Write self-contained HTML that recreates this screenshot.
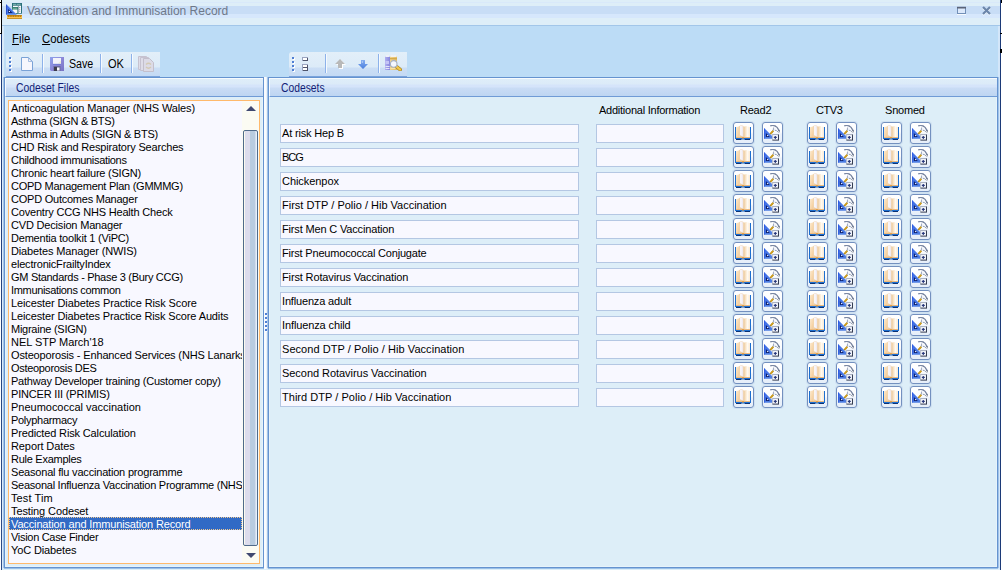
<!DOCTYPE html>
<html>
<head>
<meta charset="utf-8">
<title>Vaccination and Immunisation Record</title>
<style>
*{box-sizing:border-box;margin:0;padding:0}
html,body{width:1002px;height:570px;overflow:hidden;background:#fff;font-family:"Liberation Sans",sans-serif;}
body{position:relative}
.abs{position:absolute}
#win{position:absolute;left:2px;top:0;width:998px;height:570px;background:#bcdcf6;border-left:2px solid #d9eaf9;border-right:2px solid #d3e6f9}
#win>*{margin-left:-2px}
#title{position:absolute;left:0;top:0;width:998px;height:26px;background:linear-gradient(#deeef8 0,#deeef8 2px,#d9e9fa 2px,#d9e9fa 3px,#deeef8 3px,#deeef8 6px,#c8ddf6 6px,#c8ddf6 14px,#d6e7fc 14px,#d6e7fc 18px,#deeef8 18px,#deeef8 25px,#a2c6e9 25px)}
#title .t{position:absolute;left:25px;top:3px;font-size:12px;color:#6e7889;white-space:nowrap;line-height:16px}
#menu{position:absolute;left:0;top:26px;width:998px;height:25px}
#menu span{position:absolute;top:5px;font-size:12px;line-height:16px;color:#000;white-space:nowrap}
#menu u{text-decoration:underline;text-underline-offset:1px}
.tb{position:absolute;top:52px;height:25px;border-radius:3px 0 0 0;background:linear-gradient(#e3eff9 0,#dcebf8 15px,#cbdef5 16px,#c4daf4 24px,#7aa3dc 24px,#7aa3dc 25px)}
.tb .sep{position:absolute;top:2px;width:2px;height:19px;border-left:1px solid #8db2ea;border-right:1px solid #f6fafe}
.tb .grip{position:absolute;left:3px;top:5px;width:3px;height:15px}
.tb .txt{position:absolute;top:4px;font-size:12px;line-height:16px;color:#000;white-space:nowrap}
.tb svg{position:absolute}
.panel{position:absolute;top:77px;height:491px;border:1px solid #6593cf;background:#ddeef8;box-shadow:-1px 0 0 rgba(140,180,226,.7),1px 0 0 rgba(140,180,226,.7),0 1px 0 rgba(140,180,226,.7),inset 0 0 0 1px #e6f3fb}
.panel .hd{position:absolute;left:0;top:0;right:0;height:19px;border-left:1px solid #f6fafe;border-top:1px solid #f6fafe;border-bottom:1px solid #6f9bd6;background:linear-gradient(#deedf9 0,#dcebf8 5px,#d5e4fa 6px,#d5e4fa 8px,#c9dcf5 9px,#bdd5f2 17px);font-size:12px;line-height:19px;color:#121e76;white-space:nowrap}
#list{position:absolute;left:3px;top:22px;width:252px;height:464px;border:1px solid #ffb96b;background:#f8f8ff;overflow:hidden}
#list .it{height:13px;line-height:15px;font-size:11px;color:#000;white-space:nowrap;padding-left:2px;width:233px}
#lw{position:absolute;left:0;top:0;width:233px;height:462px;overflow:hidden}
#list .it.sel{background:#316ac5;color:#fff;outline:1px dotted #f0c890;outline-offset:-1px}
#sb{position:absolute;right:0;top:0;width:17px;height:462px;background:#fbfbf3}
#sb .th{position:absolute;left:1px;top:29px;width:15px;height:416px;border:1px solid #4f6a8a;border-radius:2px;background:linear-gradient(90deg,#fbfaf0 0,#fbfaf0 1px,#dcdcec 1.500px,#dcdcec 5.500px,#b8cce0 6.500px,#b8cce0 10.500px,#d4dcec 11px,#d4dcec 12px,#e4f2fc 12px)}
.lbl{position:absolute;font-size:11px;line-height:13px;color:#000;white-space:nowrap}
.fld{position:absolute;height:19px;border:1px solid #b4c7e3;background:#f8f8ff;font-size:11px;line-height:17px;padding-left:1px;white-space:nowrap;color:#000;overflow:hidden}
.btn{position:absolute;width:21px;height:22px;border:1px solid #7390bf;border-radius:3px;background:linear-gradient(#ffffff 0,#fcfdff 45%,#edf3fb 55%,#e6eef9 100%);box-shadow:0 0 0 1px rgba(190,208,232,.45)}
.btn svg{position:absolute;left:1px;top:2px}
</style>
</head>
<body>
<svg width="0" height="0" style="position:absolute"><defs>
<linearGradient id="pgL" x1="0" x2="1" y1="0" y2="1"><stop offset="0" stop-color="#fdebd0"/><stop offset="1" stop-color="#f3c892"/></linearGradient>
<linearGradient id="pgR" x1="0" x2="1"><stop offset="0" stop-color="#eac594"/><stop offset=".3" stop-color="#f8e2c4"/><stop offset=".6" stop-color="#fffaf2"/><stop offset="1" stop-color="#fbe9d2"/></linearGradient>
<linearGradient id="pgM" x1="0" x2="1"><stop offset="0" stop-color="#fbf7f4"/><stop offset=".6" stop-color="#f3f0fa"/><stop offset="1" stop-color="#e9dcd8"/></linearGradient>
<linearGradient id="tri" x1="0" y1="0" x2="0" y2="1"><stop offset="0" stop-color="#3a68ea"/><stop offset="1" stop-color="#4f80e2"/></linearGradient>
<symbol id="ibook" viewBox="0 0 16 16">
<path d="M0 2h1v11h14v-11h1v12h-16z" fill="#1d6fd0"/>
<path d="M1 14h5.500v1h-5.500zM9.500 14h5.500v1h-5.500z" fill="#0b3275"/><path d="M6.500 14h3v.6h-3z" fill="#2a7ad8"/>
<path d="M1 2.300l3.500-1v11.200h-3.500z" fill="url(#pgL)"/>
<path d="M4.300 1.200l1.200-1.100 3 .9v11.500h-4.200z" fill="#efcda0"/>
<path d="M5 .3l2.800.4.700 11-3.500-1.500z" fill="url(#pgM)"/>
<path d="M8.500 1.800l3-.7 3.500 1.200v10.200h-6.500z" fill="url(#pgR)"/>
<path d="M1 12h14v1h-14z" fill="#ecb97e"/><path d="M7 12h2v1.600h-2z" fill="#e6a24a"/>
</symbol>
<symbol id="itool" viewBox="0 0 17 16">
<path d="M0 2.900l8.300 8.700v2.200h-8.300z" fill="url(#tri)"/><path d="M.4 3.600v10" stroke="#2c58dc" stroke-width=".8"/><path d="M.5 3.400l7.800 8.200" stroke="#7a9ff2" stroke-width=".7" fill="none"/>
<path d="M1.900 8.100l3.900 4h-3.900z" fill="#0e2070"/><rect x="3.100" y="10" width="1.100" height="1.100" fill="#fff"/>
<path d="M6.400 8.800l3-3.200" stroke="#f3b820" stroke-width="1.900" fill="none"/><path d="M6.400 8.800l3-3.200" stroke="#4a3c10" stroke-width="1.900" stroke-dasharray=".5 .7" fill="none" opacity=".6"/>
<path d="M9.300 5.700l.4-3.200" stroke="#a4adc2" stroke-width="1.300"/>
<path d="M6.200 .9q2.300-1.100 4.700 0" stroke="#7b88a4" stroke-width="1.200" fill="none"/>
<path d="M10.600 .6q3 1.400 4.800 5.400" stroke="#76839f" stroke-width="1.400" fill="none"/>
<path d="M10 1.800l2.700 1 .7 1.800h-3z" fill="#f6f7fc"/>
<path d="M10.800 5.200q2 0 3 1.700" stroke="#8e9cb6" stroke-width="1" fill="none"/>
<rect x="13.900" y="5.600" width="1.800" height="1.700" fill="#4d566c"/><rect x="14.200" y="6" width="1" height="1" fill="#fff"/>
<rect x="8.400" y="9.400" width="6.600" height="6.200" fill="#353d52"/><rect x="8.400" y="9.400" width="5.600" height="5.200" fill="#eef1f8"/><path d="M8.400 9.700h6" stroke="#9aa2b6" stroke-width=".7"/><rect x="9.400" y="10.400" width="3.800" height="3.400" fill="#fbfcff"/>
<path d="M11.300 10.900v3M9.800 12.400h3" stroke="#26367a" stroke-width="1.100"/>
</symbol>
</defs></svg>
<div class="abs" style="left:1px;top:0;width:1px;height:570px;background:linear-gradient(#000 0,#000 33px,#1c3a78 34px,#2c4c86 100%)"></div>
<div class="abs" style="left:0;top:2px;width:2px;height:1px;background:#000"></div><div class="abs" style="left:0;top:33px;width:2px;height:1px;background:#000"></div>
<div class="abs" style="left:1000px;top:0;width:1px;height:570px;background:#1c3a78"></div>
<div class="abs" style="left:1001px;top:0;width:1px;height:3px;background:#000"></div><div class="abs" style="left:1000px;top:33px;width:2px;height:1px;background:#000"></div><div class="abs" style="left:1000px;top:49px;width:2px;height:4px;background:#000"></div>
<div id="win">
 <div id="title">
  <svg class="abs" style="left:4px;top:3px" width="16" height="16" viewBox="0 0 16 16"><defs><linearGradient id="rul" x1="0" y1="0" x2="0" y2="1"><stop offset="0" stop-color="#b87c0c"/><stop offset=".35" stop-color="#f2b030"/><stop offset=".7" stop-color="#ffc858"/><stop offset="1" stop-color="#a06c0c"/></linearGradient></defs><rect x="6" y="0" width="10" height="10.700" fill="#2a6f7a"/><rect x="7" y="2.700" width="8" height="7.300" fill="#f7fafc"/><path d="M7 1.300h3M10.600 1.300h4" stroke="#9fd0c8" stroke-width=".8"/><path d="M13.200 4.500h1M13.200 6.300h1M13.200 8.200h1" stroke="#8a94a0" stroke-width="1"/><path d="M12.300 2.700v7.300" stroke="#4a6f80" stroke-width=".7"/><rect x="6" y="4" width="6" height="6.500" fill="#2f7a6e"/><rect x="6.600" y="6.500" width="4.800" height="3.500" fill="#f7fafc"/><path d="M6.800 5.300h4.400" stroke="#8fc8b0" stroke-width=".7"/><path d="M0 1l10.800 10.800h-10.800z" fill="url(#tri)"/><path d="M.5 2v9.300" stroke="#2a50d0" stroke-width="1"/><path d="M.4 1.300l10 10" stroke="#86a8f4" stroke-width=".8"/><path d="M2.200 6l4.600 4h-4.600z" fill="#0e2070"/><rect x="2.900" y="7.900" width="1.100" height="1.100" fill="#f4f4ff"/><rect x="1" y="12" width="15" height="4" fill="url(#rul)"/><path d="M2.500 12.500v1.300M4.200 12.500v1.300M5.900 12.500v1.300M7.600 12.500v1.300M9.300 12.500v1.300M11 12.500v1.300M12.700 12.500v1.300M14.400 12.500v1.300" stroke="#8a5a08" stroke-width=".8"/></svg>
  <span class="t" id="k_title" style="display:inline-block;transform-origin:0 0;transform:scaleX(1.0004)">Vaccination and Immunisation Record</span>
  <svg class="abs" style="left:954px;top:6px" width="38" height="10" viewBox="0 0 38 10"><rect x="1.500" y="1.500" width="8" height="6" fill="#dce9fb" stroke="#7290b8" stroke-width="1"/><rect x="1" y="0.800" width="9" height="1.700" fill="#5a6478"/><path d="M1 8.500h9" stroke="#f6fafe"/><path d="M27 2l7 7M34 2l-7 7" stroke="#f4f9fe" stroke-width="2"/><path d="M27 1l7 7M34 1l-7 7" stroke="#6c86aa" stroke-width="2.200"/></svg>
 </div>
 <div id="menu"><span id="k_mF" style="left:10px;display:inline-block;transform-origin:0 0;transform:scaleX(0.9453)"><u>F</u>ile</span><span id="k_mC" style="left:40px;display:inline-block;transform-origin:0 0;transform:scaleX(0.9447)"><u>C</u>odesets</span></div>
 <div class="tb" id="tb1" style="left:4px;width:154px">
  <svg class="grip" width="3" height="15" viewBox="0 0 3 15"><g fill="#fff"><rect x="1" y="1" width="2" height="2"/><rect x="1" y="5" width="2" height="2"/><rect x="1" y="9" width="2" height="2"/><rect x="1" y="13" width="2" height="2"/></g><g fill="#4f7fd4"><rect x="0" y="0" width="2" height="2"/><rect x="0" y="4" width="2" height="2"/><rect x="0" y="8" width="2" height="2"/><rect x="0" y="12" width="2" height="2"/></g></svg>
  <svg style="left:15px;top:5px" width="12" height="14" viewBox="0 0 12 14"><path d="M.5.500h7l4 4v9h-11z" fill="#f6f6fd" stroke="#7aa2d6"/><path d="M7.500 1v3.500h3.500z" fill="#fdf4f6" stroke="#8eb0dc" stroke-width=".8"/></svg>
  <div class="sep" style="left:36px"></div>
  <svg style="left:44px;top:5px" width="14" height="14" viewBox="0 0 14 14"><defs><linearGradient id="fl" x1="0" y1="0" x2="1" y2="1"><stop offset="0" stop-color="#8ea2ec"/><stop offset=".5" stop-color="#8c88d8"/><stop offset="1" stop-color="#7873c4"/></linearGradient></defs><path d="M0 0h14v14h-13l-1-1z" fill="url(#fl)"/><rect x="3" y="1" width="8" height="6" fill="#f3f3fb"/><path d="M8 6.500l3-3v3z" fill="#ececd4"/><path d="M3 7.300h8" stroke="#6a78d0" stroke-width=".8"/><rect x="3.500" y="9" width="7" height="5" fill="#6a6a9a"/><rect x="4" y="10" width="3" height="4" fill="#3c3c4c"/><rect x="7" y="10.500" width="2.500" height="3" fill="#fafafa"/></svg>
  <span class="txt" id="k_Save" style="left:63px;display:inline-block;transform-origin:0 0;transform:scaleX(0.8882)">Save</span>
  <div class="sep" style="left:94px"></div>
  <span class="txt" id="k_OK" style="left:102px;display:inline-block;transform-origin:0 0;transform:scaleX(0.9168)">OK</span>
  <div class="sep" style="left:125px"></div>
  <svg style="left:132px;top:4px" width="16" height="16" viewBox="0 0 16 16"><path d="M.5.500h8v13h-8z" fill="#dedde9" stroke="#c6c2d0"/><path d="M2.500 1.500h8v13h-8z" fill="#dedde9" stroke="#c6c2d0"/><path d="M5.500 2.500h6l4 4v9h-10z" fill="#dcdbe7" stroke="#c3bfcc"/><path d="M8 8.500q2.500-2.500 5 0M13 11q-2.500 2.500-5 0" stroke="#d3c9b3" stroke-width="1.200" fill="none"/></svg>
 </div>
 <div class="tb" id="tb2" style="left:287px;width:118px">
  <svg class="grip" width="3" height="15" viewBox="0 0 3 15"><g fill="#fff"><rect x="1" y="1" width="2" height="2"/><rect x="1" y="5" width="2" height="2"/><rect x="1" y="9" width="2" height="2"/><rect x="1" y="13" width="2" height="2"/></g><g fill="#4f7fd4"><rect x="0" y="0" width="2" height="2"/><rect x="0" y="4" width="2" height="2"/><rect x="0" y="8" width="2" height="2"/><rect x="0" y="12" width="2" height="2"/></g></svg>
  <svg style="left:13px;top:5px" width="6" height="14" viewBox="0 0 6 14"><rect x="0" y="0" width="6" height="4" fill="#9aa4c0"/><rect x="1" y="1" width="5" height="3" fill="#4f556c"/><rect x="1" y="1" width="4" height="2" fill="#fff"/><rect x="0" y="7" width="6" height="7" fill="#9aa4c0"/><rect x="1" y="8" width="5" height="6" fill="#4f556c"/><rect x="1" y="8" width="4" height="2" fill="#fff"/><rect x="1" y="11" width="4" height="2" fill="#fff"/></svg>
  <div class="sep" style="left:36px"></div>
  <svg style="left:46px;top:7px" width="11" height="10" viewBox="0 0 11 10"><path d="M6 1l5 5h-3v4h-4v-4h-3z" fill="#fff"/><path d="M5 0l5 5h-3v4h-4v-4h-3z" fill="#b9b9b9"/></svg>
  <svg style="left:69px;top:8px" width="10" height="10" viewBox="0 0 10 10"><defs><linearGradient id="da" x1="0" y1="0" x2="0" y2="1"><stop offset="0" stop-color="#86aef0"/><stop offset="1" stop-color="#4a7ede"/></linearGradient></defs><path d="M3 0h4v4h3l-5 5-5-5h3z" fill="url(#da)"/><path d="M3.800 1h1.200v2h-1.200z" fill="#a8c4f4"/></svg>
  <div class="sep" style="left:89px"></div>
  <svg style="left:95px;top:3px" width="18" height="16" viewBox="0 0 18 16"><defs><linearGradient id="bkp" x1="0" x2="1"><stop offset="0" stop-color="#b0b0f0"/><stop offset="1" stop-color="#8684dc"/></linearGradient><linearGradient id="bkg" x1="0" x2="1"><stop offset="0" stop-color="#f0d48c"/><stop offset="1" stop-color="#e2bc68"/></linearGradient></defs><rect x="1" y="1.500" width="5" height="13.500" fill="url(#bkp)"/><path d="M1.500 1l1-1h2l1 1v1h-4z" fill="#eef0f8"/><rect x="1.500" y="6" width="3.500" height="3" fill="#c4c4f6"/><rect x="1.500" y="11" width="4" height="1" fill="#e4e4fb"/><rect x="1.500" y="13" width="4" height="1" fill="#e4e4fb"/><rect x="6" y="1.500" width="7" height="13.500" fill="url(#bkg)"/><path d="M6.500 1l1-1h1.500l.5 1 .5-1h1.500l1 1v1h-6z" fill="#f2f2f4"/><rect x="6" y="3" width="7" height="1.300" fill="#d4aa4c"/><rect x="6.500" y="13" width="5" height="1" fill="#f8e4a8"/><path d="M12.800 11.800l3.400 2.800" stroke="#a8841c" stroke-width="3.600" stroke-linecap="round"/><path d="M12.800 11.800l3.400 2.800" stroke="#f4c84c" stroke-width="2.200" stroke-linecap="round"/><circle cx="9.700" cy="8.900" r="3.300" fill="#f5f8fd" stroke="#a6b2c6" stroke-width="1.100"/></svg>
 </div>
 <div class="panel" id="pl" style="left:2px;width:260px">
  <div class="hd"><span id="k_h1" style="margin-left:10px;display:inline-block;transform-origin:0 0;transform:scaleX(0.8641)">Codeset Files</span></div>
  <div id="list"><div id="lw">
   <div class="it" id="k_it0" style="letter-spacing:-0.130px">Anticoagulation Manager (NHS Wales)</div>
   <div class="it" id="k_it1" style="letter-spacing:-0.307px">Asthma (SIGN &amp; BTS)</div>
   <div class="it" id="k_it2" style="letter-spacing:-0.245px">Asthma in Adults (SIGN &amp; BTS)</div>
   <div class="it" id="k_it3" style="letter-spacing:-0.185px">CHD Risk and Respiratory Searches</div>
   <div class="it" id="k_it4" style="letter-spacing:-0.318px">Childhood immunisations</div>
   <div class="it" id="k_it5" style="letter-spacing:-0.231px">Chronic heart failure (SIGN)</div>
   <div class="it" id="k_it6" style="letter-spacing:-0.260px">COPD Management Plan (GMMMG)</div>
   <div class="it" id="k_it7" style="letter-spacing:-0.232px">COPD Outcomes Manager</div>
   <div class="it" id="k_it8" style="letter-spacing:-0.185px">Coventry CCG NHS Health Check</div>
   <div class="it" id="k_it9" style="letter-spacing:-0.181px">CVD Decision Manager</div>
   <div class="it" id="k_it10" style="letter-spacing:-0.212px">Dementia toolkit 1 (ViPC)</div>
   <div class="it" id="k_it11" style="letter-spacing:-0.136px">Diabetes Manager (NWIS)</div>
   <div class="it" id="k_it12" style="letter-spacing:-0.197px">electronicFrailtyIndex</div>
   <div class="it" id="k_it13" style="letter-spacing:-0.296px">GM Standards - Phase 3 (Bury CCG)</div>
   <div class="it" id="k_it14" style="letter-spacing:-0.335px">Immunisations common</div>
   <div class="it" id="k_it15" style="letter-spacing:-0.117px">Leicester Diabetes Practice Risk Score</div>
   <div class="it" id="k_it16" style="letter-spacing:-0.126px">Leicester Diabetes Practice Risk Score Audits</div>
   <div class="it" id="k_it17" style="letter-spacing:-0.255px">Migraine (SIGN)</div>
   <div class="it" id="k_it18" style="letter-spacing:-0.034px">NEL STP March&#x27;18</div>
   <div class="it" id="k_it19" style="letter-spacing:-0.153px">Osteoporosis - Enhanced Services (NHS Lanarkshire)</div>
   <div class="it" id="k_it20" style="letter-spacing:-0.312px">Osteoporosis DES</div>
   <div class="it" id="k_it21" style="letter-spacing:-0.216px">Pathway Developer training (Customer copy)</div>
   <div class="it" id="k_it22" style="letter-spacing:-0.181px">PINCER III (PRIMIS)</div>
   <div class="it" id="k_it23" style="letter-spacing:-0.015px">Pneumococcal vaccination</div>
   <div class="it" id="k_it24" style="letter-spacing:-0.291px">Polypharmacy</div>
   <div class="it" id="k_it25" style="letter-spacing:-0.144px">Predicted Risk Calculation</div>
   <div class="it" id="k_it26" style="letter-spacing:-0.101px">Report Dates</div>
   <div class="it" id="k_it27" style="letter-spacing:-0.265px">Rule Examples</div>
   <div class="it" id="k_it28" style="letter-spacing:-0.192px">Seasonal flu vaccination programme</div>
   <div class="it" id="k_it29" style="letter-spacing:-0.256px">Seasonal Influenza Vaccination Programme (NHS)</div>
   <div class="it" id="k_it30" style="letter-spacing:0.092px">Test Tim</div>
   <div class="it" id="k_it31" style="letter-spacing:-0.106px">Testing Codeset</div>
   <div class="it sel" id="k_it32" style="letter-spacing:-0.140px">Vaccination and Immunisation Record</div>
   <div class="it" id="k_it33" style="letter-spacing:-0.302px">Vision Case Finder</div>
   <div class="it" id="k_it34" style="letter-spacing:-0.133px">YoC Diabetes</div>
   </div><div id="sb"><svg class="abs" style="left:4px;top:5px" width="10" height="5" viewBox="0 0 10 5"><path d="M0 5l5-5 5 5z" fill="#3f4870"/></svg><div class="th"></div><svg class="abs" style="left:4px;top:452px" width="10" height="5" viewBox="0 0 10 5"><path d="M0 0h10l-5 5z" fill="#3f4870"/></svg></div>
  </div>
 </div>
 <div class="abs" style="left:0;top:569px;width:998px;height:1px;background:#dceef8"></div>
 <div class="abs" style="left:262px;top:77px;width:4px;height:492px;background:linear-gradient(90deg,#f6f9fe 0,#ffffff 30%,#eef5fc 55%,#d2e5f7 100%)"></div>
 <svg class="abs" style="left:263px;top:313px" width="3" height="19" viewBox="0 0 3 19"><g fill="#fff"><rect x="1" y="1" width="2" height="2"/><rect x="1" y="5" width="2" height="2"/><rect x="1" y="9" width="2" height="2"/><rect x="1" y="13" width="2" height="2"/><rect x="1" y="17" width="2" height="2"/></g><g fill="#4f7fd4"><rect x="0" y="0" width="2" height="2"/><rect x="0" y="4" width="2" height="2"/><rect x="0" y="8" width="2" height="2"/><rect x="0" y="12" width="2" height="2"/><rect x="0" y="16" width="2" height="2"/></g></svg>
 <div class="panel" id="pr" style="left:266px;width:730px">
  <div class="hd"><span id="k_h2" style="margin-left:11px;display:inline-block;transform-origin:0 0;transform:scaleX(0.8599)">Codesets</span></div>
  <span class="lbl" id="k_c0" style="left:330px;top:26px;letter-spacing:-0.243px">Additional Information</span>
  <span class="lbl" id="k_c1" style="left:471px;top:26px;letter-spacing:-0.230px">Read2</span>
  <span class="lbl" id="k_c2" style="left:547px;top:26px;letter-spacing:-0.442px">CTV3</span>
  <span class="lbl" id="k_c3" style="left:616px;top:26px;letter-spacing:-0.197px">Snomed</span>
  <div class="fld" style="left:11px;top:46px;width:299px"><span id="k_r0" style="letter-spacing:-0.174px">At risk Hep B</span></div><div class="fld" style="left:327px;top:46px;width:128px"></div>
  <div class="btn" style="left:464px;top:44px"><svg width="16" height="16"><use href="#ibook"/></svg></div>  <div class="btn" style="left:493px;top:44px"><svg width="17" height="16"><use href="#itool"/></svg></div>  <div class="btn" style="left:538px;top:44px"><svg width="16" height="16"><use href="#ibook"/></svg></div>  <div class="btn" style="left:567px;top:44px"><svg width="17" height="16"><use href="#itool"/></svg></div>  <div class="btn" style="left:612px;top:44px"><svg width="16" height="16"><use href="#ibook"/></svg></div>  <div class="btn" style="left:641px;top:44px"><svg width="17" height="16"><use href="#itool"/></svg></div>
  <div class="fld" style="left:11px;top:70px;width:299px"><span id="k_r1" style="letter-spacing:-0.972px">BCG</span></div><div class="fld" style="left:327px;top:70px;width:128px"></div>
  <div class="btn" style="left:464px;top:68px"><svg width="16" height="16"><use href="#ibook"/></svg></div>  <div class="btn" style="left:493px;top:68px"><svg width="17" height="16"><use href="#itool"/></svg></div>  <div class="btn" style="left:538px;top:68px"><svg width="16" height="16"><use href="#ibook"/></svg></div>  <div class="btn" style="left:567px;top:68px"><svg width="17" height="16"><use href="#itool"/></svg></div>  <div class="btn" style="left:612px;top:68px"><svg width="16" height="16"><use href="#ibook"/></svg></div>  <div class="btn" style="left:641px;top:68px"><svg width="17" height="16"><use href="#itool"/></svg></div>
  <div class="fld" style="left:11px;top:94px;width:299px"><span id="k_r2" style="letter-spacing:-0.054px">Chickenpox</span></div><div class="fld" style="left:327px;top:94px;width:128px"></div>
  <div class="btn" style="left:464px;top:92px"><svg width="16" height="16"><use href="#ibook"/></svg></div>  <div class="btn" style="left:493px;top:92px"><svg width="17" height="16"><use href="#itool"/></svg></div>  <div class="btn" style="left:538px;top:92px"><svg width="16" height="16"><use href="#ibook"/></svg></div>  <div class="btn" style="left:567px;top:92px"><svg width="17" height="16"><use href="#itool"/></svg></div>  <div class="btn" style="left:612px;top:92px"><svg width="16" height="16"><use href="#ibook"/></svg></div>  <div class="btn" style="left:641px;top:92px"><svg width="17" height="16"><use href="#itool"/></svg></div>
  <div class="fld" style="left:11px;top:118px;width:299px"><span id="k_r3" style="letter-spacing:-0.002px">First DTP / Polio / Hib Vaccination</span></div><div class="fld" style="left:327px;top:118px;width:128px"></div>
  <div class="btn" style="left:464px;top:116px"><svg width="16" height="16"><use href="#ibook"/></svg></div>  <div class="btn" style="left:493px;top:116px"><svg width="17" height="16"><use href="#itool"/></svg></div>  <div class="btn" style="left:538px;top:116px"><svg width="16" height="16"><use href="#ibook"/></svg></div>  <div class="btn" style="left:567px;top:116px"><svg width="17" height="16"><use href="#itool"/></svg></div>  <div class="btn" style="left:612px;top:116px"><svg width="16" height="16"><use href="#ibook"/></svg></div>  <div class="btn" style="left:641px;top:116px"><svg width="17" height="16"><use href="#itool"/></svg></div>
  <div class="fld" style="left:11px;top:142px;width:299px"><span id="k_r4" style="letter-spacing:-0.162px">First Men C Vaccination</span></div><div class="fld" style="left:327px;top:142px;width:128px"></div>
  <div class="btn" style="left:464px;top:140px"><svg width="16" height="16"><use href="#ibook"/></svg></div>  <div class="btn" style="left:493px;top:140px"><svg width="17" height="16"><use href="#itool"/></svg></div>  <div class="btn" style="left:538px;top:140px"><svg width="16" height="16"><use href="#ibook"/></svg></div>  <div class="btn" style="left:567px;top:140px"><svg width="17" height="16"><use href="#itool"/></svg></div>  <div class="btn" style="left:612px;top:140px"><svg width="16" height="16"><use href="#ibook"/></svg></div>  <div class="btn" style="left:641px;top:140px"><svg width="17" height="16"><use href="#itool"/></svg></div>
  <div class="fld" style="left:11px;top:166px;width:299px"><span id="k_r5" style="letter-spacing:-0.189px">First Pneumococcal Conjugate</span></div><div class="fld" style="left:327px;top:166px;width:128px"></div>
  <div class="btn" style="left:464px;top:164px"><svg width="16" height="16"><use href="#ibook"/></svg></div>  <div class="btn" style="left:493px;top:164px"><svg width="17" height="16"><use href="#itool"/></svg></div>  <div class="btn" style="left:538px;top:164px"><svg width="16" height="16"><use href="#ibook"/></svg></div>  <div class="btn" style="left:567px;top:164px"><svg width="17" height="16"><use href="#itool"/></svg></div>  <div class="btn" style="left:612px;top:164px"><svg width="16" height="16"><use href="#ibook"/></svg></div>  <div class="btn" style="left:641px;top:164px"><svg width="17" height="16"><use href="#itool"/></svg></div>
  <div class="fld" style="left:11px;top:190px;width:299px"><span id="k_r6" style="letter-spacing:-0.139px">First Rotavirus Vaccination</span></div><div class="fld" style="left:327px;top:190px;width:128px"></div>
  <div class="btn" style="left:464px;top:188px"><svg width="16" height="16"><use href="#ibook"/></svg></div>  <div class="btn" style="left:493px;top:188px"><svg width="17" height="16"><use href="#itool"/></svg></div>  <div class="btn" style="left:538px;top:188px"><svg width="16" height="16"><use href="#ibook"/></svg></div>  <div class="btn" style="left:567px;top:188px"><svg width="17" height="16"><use href="#itool"/></svg></div>  <div class="btn" style="left:612px;top:188px"><svg width="16" height="16"><use href="#ibook"/></svg></div>  <div class="btn" style="left:641px;top:188px"><svg width="17" height="16"><use href="#itool"/></svg></div>
  <div class="fld" style="left:11px;top:214px;width:299px"><span id="k_r7" style="letter-spacing:-0.169px">Influenza adult</span></div><div class="fld" style="left:327px;top:214px;width:128px"></div>
  <div class="btn" style="left:464px;top:212px"><svg width="16" height="16"><use href="#ibook"/></svg></div>  <div class="btn" style="left:493px;top:212px"><svg width="17" height="16"><use href="#itool"/></svg></div>  <div class="btn" style="left:538px;top:212px"><svg width="16" height="16"><use href="#ibook"/></svg></div>  <div class="btn" style="left:567px;top:212px"><svg width="17" height="16"><use href="#itool"/></svg></div>  <div class="btn" style="left:612px;top:212px"><svg width="16" height="16"><use href="#ibook"/></svg></div>  <div class="btn" style="left:641px;top:212px"><svg width="17" height="16"><use href="#itool"/></svg></div>
  <div class="fld" style="left:11px;top:238px;width:299px"><span id="k_r8" style="letter-spacing:-0.116px">Influenza child</span></div><div class="fld" style="left:327px;top:238px;width:128px"></div>
  <div class="btn" style="left:464px;top:236px"><svg width="16" height="16"><use href="#ibook"/></svg></div>  <div class="btn" style="left:493px;top:236px"><svg width="17" height="16"><use href="#itool"/></svg></div>  <div class="btn" style="left:538px;top:236px"><svg width="16" height="16"><use href="#ibook"/></svg></div>  <div class="btn" style="left:567px;top:236px"><svg width="17" height="16"><use href="#itool"/></svg></div>  <div class="btn" style="left:612px;top:236px"><svg width="16" height="16"><use href="#ibook"/></svg></div>  <div class="btn" style="left:641px;top:236px"><svg width="17" height="16"><use href="#itool"/></svg></div>
  <div class="fld" style="left:11px;top:262px;width:299px"><span id="k_r9" style="letter-spacing:0.052px">Second DTP / Polio / Hib Vaccination</span></div><div class="fld" style="left:327px;top:262px;width:128px"></div>
  <div class="btn" style="left:464px;top:260px"><svg width="16" height="16"><use href="#ibook"/></svg></div>  <div class="btn" style="left:493px;top:260px"><svg width="17" height="16"><use href="#itool"/></svg></div>  <div class="btn" style="left:538px;top:260px"><svg width="16" height="16"><use href="#ibook"/></svg></div>  <div class="btn" style="left:567px;top:260px"><svg width="17" height="16"><use href="#itool"/></svg></div>  <div class="btn" style="left:612px;top:260px"><svg width="16" height="16"><use href="#ibook"/></svg></div>  <div class="btn" style="left:641px;top:260px"><svg width="17" height="16"><use href="#itool"/></svg></div>
  <div class="fld" style="left:11px;top:286px;width:299px"><span id="k_r10" style="letter-spacing:-0.046px">Second Rotavirus Vaccination</span></div><div class="fld" style="left:327px;top:286px;width:128px"></div>
  <div class="btn" style="left:464px;top:284px"><svg width="16" height="16"><use href="#ibook"/></svg></div>  <div class="btn" style="left:493px;top:284px"><svg width="17" height="16"><use href="#itool"/></svg></div>  <div class="btn" style="left:538px;top:284px"><svg width="16" height="16"><use href="#ibook"/></svg></div>  <div class="btn" style="left:567px;top:284px"><svg width="17" height="16"><use href="#itool"/></svg></div>  <div class="btn" style="left:612px;top:284px"><svg width="16" height="16"><use href="#ibook"/></svg></div>  <div class="btn" style="left:641px;top:284px"><svg width="17" height="16"><use href="#itool"/></svg></div>
  <div class="fld" style="left:11px;top:310px;width:299px"><span id="k_r11" style="letter-spacing:0.031px">Third DTP / Polio / Hib Vaccination</span></div><div class="fld" style="left:327px;top:310px;width:128px"></div>
  <div class="btn" style="left:464px;top:308px"><svg width="16" height="16"><use href="#ibook"/></svg></div>  <div class="btn" style="left:493px;top:308px"><svg width="17" height="16"><use href="#itool"/></svg></div>  <div class="btn" style="left:538px;top:308px"><svg width="16" height="16"><use href="#ibook"/></svg></div>  <div class="btn" style="left:567px;top:308px"><svg width="17" height="16"><use href="#itool"/></svg></div>  <div class="btn" style="left:612px;top:308px"><svg width="16" height="16"><use href="#ibook"/></svg></div>  <div class="btn" style="left:641px;top:308px"><svg width="17" height="16"><use href="#itool"/></svg></div>
 </div>
</div>
</body>
</html>
